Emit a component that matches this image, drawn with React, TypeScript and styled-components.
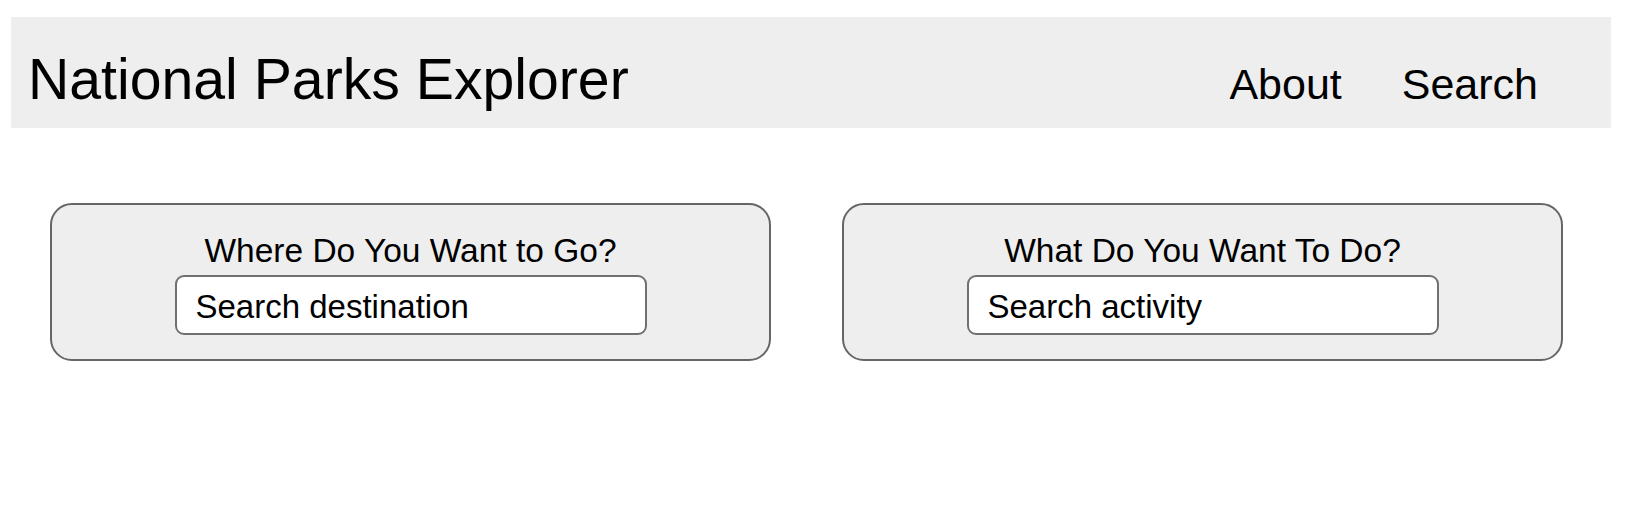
import React from "react";
import styled, { createGlobalStyle } from "styled-components";

const GlobalStyle = createGlobalStyle`
  html, body {
    margin: 0;
    padding: 0;
    background: #ffffff;
  }
  body {
    font-family: "Liberation Sans", Arial, sans-serif;
    color: #000;
  }
  * { box-sizing: border-box; }
`;

const Page = styled.div`
  padding: 17px 0 0 11px;
  width: 1611px;
`;

const Header = styled.header`
  display: flex;
  justify-content: space-between;
  align-items: baseline;
  height: 111px;
  padding: 30px 73px 0 17px;
  background: #eeeeee;
`;

const Title = styled.h1`
  margin: 0;
  font-size: 57.2px;
  font-weight: 400;
  line-height: 64px;
`;

const Nav = styled.nav`
  display: flex;
  align-items: baseline;
  gap: 60px;
`;

const NavLink = styled.a`
  font-size: 43px;
  line-height: 50px;
  color: #000;
  text-decoration: none;
  cursor: pointer;
`;

const Main = styled.main`
  display: flex;
  gap: 71px;
  padding: 75px 0 0 39px;
`;

const Card = styled.section`
  width: 721px;
  height: 158px;
  display: flex;
  flex-direction: column;
  align-items: center;
  padding-top: 27px;
  background: #eeeeee;
  border: 2px solid #666666;
  border-radius: 22px;
`;

const CardTitle = styled.h2`
  margin: 0 0 5px;
  font-size: 33.5px;
  font-weight: 400;
  line-height: 38px;
`;

const SearchInput = styled.input`
  width: 472px;
  height: 60px;
  padding: 3px 19px 0;
  font-family: "Liberation Sans", Arial, sans-serif;
  font-size: 33px;
  color: #000;
  background: #ffffff;
  border: 2px solid #707070;
  border-radius: 9px;
  outline: none;

  &::placeholder {
    color: #000;
    opacity: 1;
  }
`;

const cards = [
  { title: "Where Do You Want to Go?", placeholder: "Search destination" },
  { title: "What Do You Want To Do?", placeholder: "Search activity" },
];

export default function App() {
  return (
    <>
      <GlobalStyle />
      <Page>
        <Header>
          <Title>National Parks Explorer</Title>
          <Nav>
            <NavLink>About</NavLink>
            <NavLink>Search</NavLink>
          </Nav>
        </Header>
        <Main>
          {cards.map((c) => (
            <Card key={c.title}>
              <CardTitle>{c.title}</CardTitle>
              <SearchInput placeholder={c.placeholder} />
            </Card>
          ))}
        </Main>
      </Page>
    </>
  );
}
